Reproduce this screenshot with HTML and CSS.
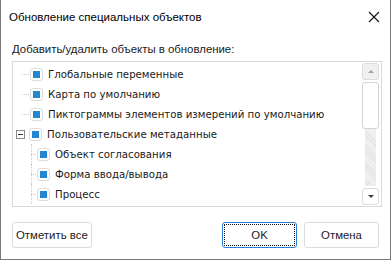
FILE: index.html
```html
<!DOCTYPE html>
<html lang="ru">
<head>
  <meta charset="UTF-8">
  <title>Обновление специальных объектов</title>
  <link rel="stylesheet" href="styles.css">
</head>
<body>
  <div class="dialog">
    <div class="titlebar">
      <span class="title">Обновление специальных объектов</span>
      <svg class="close" width="12" height="12" viewBox="0 0 12 12">
        <path d="M1 1 L11 11 M11 1 L1 11" stroke="#111" stroke-width="1.1" fill="none"/>
      </svg>
    </div>

    <div class="content">
      <div class="caption">Добавить/удалить объекты в обновление:</div>

      <div class="tree">
        <ul class="nodes">
          <li class="node"><span class="hline"></span><span class="check"></span>Глобальные переменные</li>
          <li class="node"><span class="hline"></span><span class="check"></span>Карта по умолчанию</li>
          <li class="node"><span class="hline"></span><span class="check"></span>Пиктограммы элементов измерений по умолчанию</li>
          <li class="node"><span class="expander"></span><span class="check"></span>Пользовательские метаданные</li>
          <li class="node child"><span class="vline"></span><span class="hline"></span><span class="check"></span>Объект согласования</li>
          <li class="node child"><span class="vline"></span><span class="hline"></span><span class="check"></span>Форма ввода/вывода</li>
          <li class="node child"><span class="vline"></span><span class="hline"></span><span class="check"></span>Процесс</li>
        </ul>
        <div class="scrollbar">
          <div class="sb-btn"><span class="arrow up"></span></div>
          <div class="sb-track">
            <div class="sb-thumb"></div>
          </div>
          <div class="sb-btn down"><span class="arrow dn"></span></div>
        </div>
      </div>
    </div>

    <div class="footer">
      <button class="btn">Отметить все</button>
      <span class="spacer"></span>
      <button class="btn default">OK</button>
      <button class="btn">Отмена</button>
    </div>
  </div>
</body>
</html>
```

FILE: styles.css
```css
html, body {
  margin: 0;
  padding: 0;
  background: #fff;
}
.dialog {
  width: 391px;
  height: 260px;
  box-sizing: border-box;
  border: 1px solid #7a7a7a;
  border-top: none;
  display: flex;
  flex-direction: column;
  font-family: "Liberation Sans", sans-serif;
  color: #1a1a1a;
}
.titlebar {
  height: 33px;
  display: flex;
  align-items: center;
  padding: 0 5px 0 8px;
  flex: none;
}
.title {
  font-size: 11.5px;
  flex: 1;
  color: #000;
}
.close {
  margin-right: 5px;
}
.content {
  padding: 0 8px 0 11px;
  flex: none;
}
.caption {
  font-size: 11.4px;
  line-height: 16px;
  margin: 8px 0 4px;
}
.tree {
  height: 146px;
  box-sizing: border-box;
  border: 1px solid #d9d9d9;
  display: flex;
  overflow: hidden;
}
.nodes {
  list-style: none;
  margin: 0;
  padding: 2px 0 0 0;
  flex: 1;
  font-family: "DejaVu Sans", sans-serif;
  font-size: 10.2px;
  color: #1a1a1a;
}
.node {
  height: 20px;
  display: flex;
  align-items: center;
  position: relative;
  padding-left: 8px;
  white-space: nowrap;
}
.node.child {
  padding-left: 18px;
}
.hline {
  width: 7px;
  border-top: 1px dotted #c8c8c8;
  margin-left: 1px;
}
.child .hline {
  width: 5px;
  margin-left: 0;
}
.vline {
  position: absolute;
  left: 18px;
  top: 0;
  bottom: 0;
  border-left: 1px dotted #c8c8c8;
}
.expander {
  width: 9px;
  height: 9px;
  box-sizing: border-box;
  border: 1px solid #8a8a8a;
  position: relative;
  margin-left: -5px;
  margin-right: 3px;
}
.expander::after {
  content: "";
  position: absolute;
  left: 1px;
  right: 1px;
  top: 3px;
  height: 1px;
  background: #333;
}
.check {
  width: 13px;
  height: 13px;
  box-sizing: border-box;
  border: 1px solid #dcdcdc;
  border-radius: 3px;
  margin: 0 5px 0 1px;
  display: flex;
  align-items: center;
  justify-content: center;
}
.check::after {
  content: "";
  width: 7px;
  height: 7px;
  background: #1f88d0;
}
.scrollbar {
  width: 17px;
  display: flex;
  flex-direction: column;
  padding: 1px 2px 1px 0;
}
.sb-btn {
  height: 17px;
  box-sizing: border-box;
  border: 1px solid #dcdcdc;
  border-radius: 3px;
  background: #f0f0f0;
  display: flex;
  align-items: center;
  justify-content: center;
  flex: none;
}
.sb-btn.down {
  background: #fff;
}
.arrow {
  width: 0;
  height: 0;
  border-left: 3px solid transparent;
  border-right: 3px solid transparent;
}
.arrow.up {
  border-bottom: 3px solid #a0a0a0;
}
.arrow.dn {
  border-top: 3px solid #404040;
}
.sb-track {
  flex: 1;
  margin: 2px 3px;
  background: repeating-linear-gradient(45deg, #e4e4e4 0 1px, #f4f4f4 1px 2px);
  position: relative;
}
.sb-thumb {
  position: absolute;
  left: -3px;
  right: -3px;
  top: 0;
  height: 47px;
  box-sizing: border-box;
  border: 1px solid #d4d4d4;
  border-radius: 3px;
  background: #fff;
}
.footer {
  display: flex;
  align-items: center;
  gap: 7px;
  padding: 15px 11px 0 11px;
}
.spacer {
  flex: 1;
}
.btn {
  height: 26px;
  min-width: 75px;
  box-sizing: border-box;
  border: 1px solid #dcdcdc;
  border-radius: 3px;
  background: #fff;
  font-family: "Liberation Sans", sans-serif;
  font-size: 11.4px;
  color: #1a1a1a;
  padding: 0 3px;
}
.btn.default {
  border-color: #2a7fd4;
  outline: 1px dotted #111;
  outline-offset: -3px;
}
```
